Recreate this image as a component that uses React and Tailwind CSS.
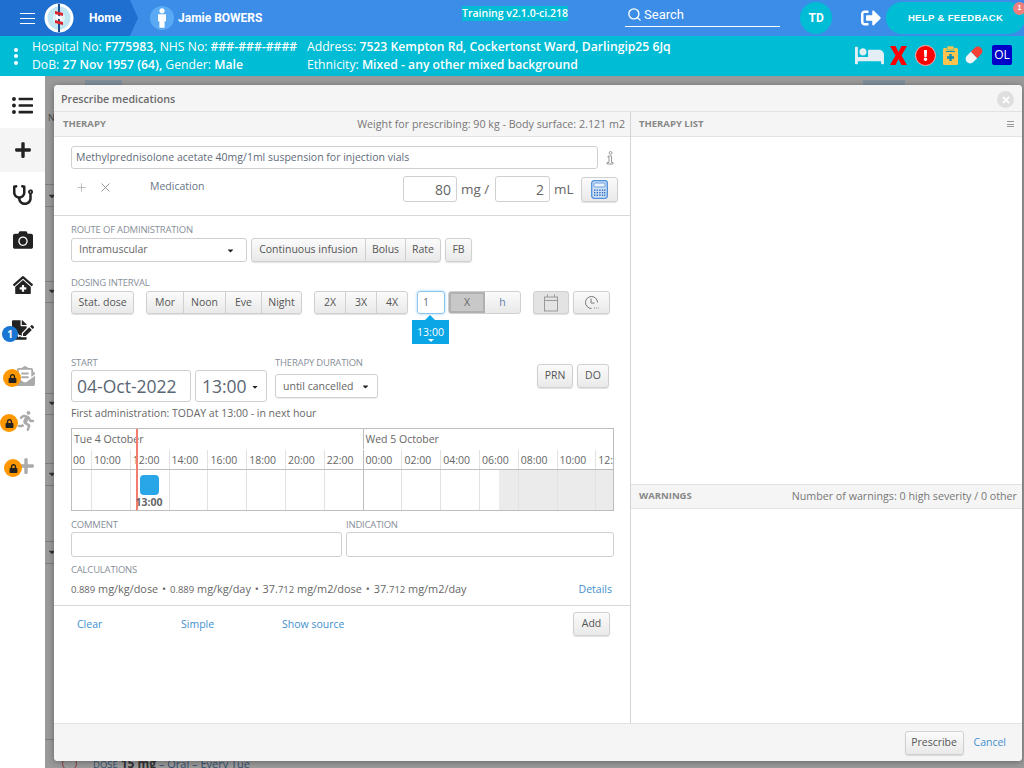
import React from "react";
import { FaListUl, FaPlus, FaStethoscope, FaCamera, FaClinicMedical, FaFileSignature, FaLock, FaRunning, FaEnvelopeOpenText, FaSignOutAlt, FaBed, FaExclamation, FaCaretDown, FaTimes } from "react-icons/fa";
import { Search, X, Plus } from "lucide-react";

const Label = ({ children, className = "" }) => (
  <div className={"text-[9.5px] leading-[12px] text-[#888f99] tracking-[-0.2px] " + className}>{children}</div>
);

const Btn = ({ children, className = "" }) => (
  <div className={"flex items-center justify-center border border-[#d0d0d0] rounded-[3px] bg-gradient-to-b from-[#fbfbfb] to-[#e9e9e9] text-[10.5px] text-[#555] shadow-[0_1px_1px_rgba(0,0,0,0.12)] " + className}>{children}</div>
);

const Group = ({ items }) => (
  <div className="flex border border-[#d0d0d0] rounded-[3px] bg-gradient-to-b from-[#fbfbfb] to-[#e9e9e9] shadow-[0_1px_1px_rgba(0,0,0,0.12)] text-[10.5px] text-[#555]">
    {items.map(([t, w], i) => (
      <div key={t} style={{ width: w }} className={"flex items-center justify-center " + (i ? "border-l border-[#d0d0d0]" : "")}>{t}</div>
    ))}
  </div>
);

const Lock = () => (
  <div className="w-[18px] h-[18px] rounded-full bg-[#ff9800] flex items-center justify-center text-[#222]">
    <FaLock size={9} />
  </div>
);

const Logo = () => (
  <svg width="30" height="30" viewBox="0 0 30 30">
    <circle cx="15" cy="15" r="14.5" fill="#fff" />
    <circle cx="15" cy="15" r="11.5" fill="#bfe6f2" />
    <circle cx="15" cy="15" r="6" fill="#e3f4f9" />
    <rect x="14" y="1" width="2" height="28" fill="#1d4f8f" />
    <path d="M11 8 L19 10 L19 13 L11 11 Z M11 17 L19 19 L19 22 L11 20 Z" fill="#d9252c" />
    <path d="M12 12 L18 14 L18 17 L12 15 Z" fill="#fff" />
  </svg>
);

const Person = () => (
  <svg width="12" height="20" viewBox="0 0 12 20" fill="#fff">
    <circle cx="6" cy="2.8" r="2.6" />
    <path d="M2 6.2 h8 v7 h-1.4 v6.5 h-5.2 v-6.5 H2 Z" />
  </svg>
);

const RedX = () => (
  <svg width="17" height="19" viewBox="0 0 17 19" fill="#f00">
    <path d="M0 0 H5.5 L8.5 6 L11.5 0 H17 L11.5 9.5 L17 19 H11.5 L8.5 13 L5.5 19 H0 L5.5 9.5 Z" />
  </svg>
);

const Clip = () => (
  <svg width="15" height="19" viewBox="0 0 15 19">
    <rect x="0" y="2" width="15" height="17" rx="1.5" fill="#ffc44d" />
    <rect x="4" y="0" width="7" height="4" rx="1" fill="#ffc44d" stroke="#00bcd4" strokeWidth="0.6" />
    <rect x="3" y="5" width="9" height="1" fill="#0a8fb5" />
    <path d="M6.3 8 h2.4 v2.3 H11 v2.4 H8.7 V15 H6.3 v-2.3 H4 v-2.4 h2.3 Z" fill="#0a8fb5" />
  </svg>
);

const Pill = () => (
  <svg width="20" height="20" viewBox="0 0 20 20">
    <g transform="rotate(-45 10 10)">
      <path d="M10 5.5 H15.5 a4.5 4.5 0 0 1 0 9 H10 Z" fill="#f44336" />
      <path d="M10 5.5 H4.5 a4.5 4.5 0 0 0 0 9 H10 Z" fill="#f4f4f4" />
    </g>
  </svg>
);

const Calc = () => (
  <svg width="17" height="19" viewBox="0 0 17 19" fill="none">
    <rect x="0.7" y="0.7" width="15.6" height="17.6" rx="2.5" fill="#cfe0f5" stroke="#4f8fdc" strokeWidth="1.3" />
    <rect x="3" y="3" width="11" height="4" rx="0.5" fill="#e9f1fb" stroke="#4f8fdc" strokeWidth="0.8" />
    {[9.5, 12, 14.5].map((y) => [3, 5.6, 8.2, 10.8, 13].map((x) => <rect key={x + "-" + y} x={x} y={y} width="1.4" height="1.4" fill="#2f6fc4" />))}
  </svg>
);

const ClockDots = () => (
  <svg width="15" height="15" viewBox="0 0 15 15" fill="none" stroke="#777" strokeWidth="1">
    <path d="M13.5 7.5 A6 6 0 1 0 7.5 13.5" />
    <path d="M7 3.5 V8 H10.5" />
    <path d="M10 13 h0.8 M12 13 h0.8 M14 13 h0.6" />
  </svg>
);

const CalIcon = () => (
  <svg width="16" height="18" viewBox="0 0 16 18" fill="none" stroke="#999" strokeWidth="1">
    <rect x="1.5" y="3" width="13" height="14" />
    <path d="M1.5 6.5 H14.5" />
    <path d="M4.5 0.5 V3 M11.5 0.5 V3" />
  </svg>
);

const InfoIcon = () => (
  <svg width="8" height="14" viewBox="0 0 8 14" fill="none" stroke="#999" strokeWidth="1">
    <circle cx="4.6" cy="1.9" r="1.4" />
    <path d="M2 5 H5.5 V11.5 H7 V13 H1 V11.5 H3 V6.4 H2 Z" />
  </svg>
);

const hours = ["10:00", "12:00", "14:00", "16:00", "18:00", "20:00", "22:00", "00:00", "02:00", "04:00", "06:00", "08:00", "10:00", "12:"];

const Timeline = () => (
  <div className="relative w-[543px] h-[83px] border border-[#bdbdbd] text-[10.5px] text-[#666] overflow-hidden">
    <div className="flex h-[20px] items-center">
      <div className="w-[290.5px] pl-[2px] pt-[1px]">Tue 4 October</div>
      <div className="flex-1 pl-[2px] pt-[1px] border-l border-[#bdbdbd] h-full flex items-center">Wed 5 October</div>
    </div>
    <div className="flex h-[21px] border-b border-[#bdbdbd] pt-[1px]">
      <div className="w-[19px] flex items-center overflow-hidden justify-end pr-[6px] shrink-0 pt-[2px]">00</div>
      {hours.map((h, i) => (
        <div key={i} className={"w-[38.8px] shrink-0 flex items-center pl-[2px] pt-[2px] border-l " + (i === 7 ? "border-[#bdbdbd]" : "border-[#e2e2e2]")}>{h}</div>
      ))}
    </div>
    <div className="flex h-[40px]">
      <div className="w-[19px] shrink-0" />
      {hours.map((h, i) => (
        <div key={i} className={"w-[38.8px] shrink-0 border-l " + (i === 7 ? "border-[#bdbdbd]" : "border-[#e2e2e2]") + (i >= 11 ? " bg-[#ebebeb]" : "")}>
          {i === 10 ? <div className="ml-[19px] h-full bg-[#ebebeb]" /> : null}
        </div>
      ))}
    </div>
    <div className="absolute left-[64px] top-0 bottom-0 w-[2px] bg-[#f47c6e]" />
    <div className="absolute left-[68px] top-[46px] w-[19px] h-[20px] rounded-[4px] bg-[#29a6e8]" />
    <div className="absolute left-[62px] top-[67px] w-[30px] text-center font-bold text-[10.5px] leading-[13px] text-[#666]">13:00</div>
  </div>
);

const StripLine = ({ className }) => <div className={"absolute left-0 w-[12px] h-px bg-[#7d7d7d] " + className} />;

export default function App() {
  return (
    <div className="w-[1024px] h-[768px] overflow-hidden flex flex-col font-['Open_Sans',sans-serif] bg-white">
      {/* top bar */}
      <div className="h-[36px] flex bg-[#3b8de8] text-white shrink-0">
        <div className="w-[138px] shrink-0 h-full bg-[#1f6fd1] [clip-path:polygon(0_0,130px_0,138px_50%,130px_100%,0_100%)] flex items-center pl-[20px]">
          <div className="flex flex-col gap-[4px] w-[15px]">
            <div className="h-[1px] bg-white" /><div className="h-[1px] bg-white" /><div className="h-[1px] bg-white" />
          </div>
          <div className="ml-[9px]"><Logo /></div>
          <div className="ml-[15px] text-[12px] font-bold font-['Roboto',sans-serif]">Home</div>
        </div>
        <div className="ml-[12px] w-[24px] h-[24px] mt-[6px] rounded-full bg-[#5aa9f5] flex items-center justify-center shrink-0"><Person /></div>
        <div className="ml-[4px] mt-[10px] w-[84px] shrink-0 text-[12px] leading-[16px] font-bold font-['Roboto',sans-serif] whitespace-nowrap">Jamie BOWERS</div>
        <div className="ml-[200px] mt-[6px] h-[15px] shrink-0 bg-[#00bcd4] text-[10.5px] leading-[14px] px-0 font-semibold whitespace-nowrap">Training v2.1.0-ci.218</div>
        <div className="ml-[57px] mt-[3px] w-[155px] h-[24px] shrink-0 border-b border-white flex items-center pl-[2px]">
          <Search size={15} strokeWidth={2.2} />
          <span className="ml-[2px] text-[13px] font-['Roboto',sans-serif]">Search</span>
        </div>
        <div className="ml-[20px] mt-[2px] w-[32px] h-[32px] shrink-0 rounded-full bg-[#00bcd4] flex items-center justify-center text-[12px] font-bold font-['Roboto',sans-serif]">TD</div>
        <div className="ml-[29px] mt-[8px] shrink-0"><FaSignOutAlt size={20} /></div>
        <div className="ml-[5px] mt-[2px] relative w-[139px] h-[32px] shrink-0 rounded-[16px] bg-[#00bcd4] flex items-center justify-center text-[9.5px] font-bold tracking-[0.35px] font-['Liberation_Sans',sans-serif]">
          HELP &amp; FEEDBACK
          <div className="absolute right-[-1px] top-0 w-[13px] h-[13px] rounded-full bg-[#ef7f7f] flex items-center justify-center text-[7px]">1</div>
        </div>
      </div>

      {/* patient bar */}
      <div className="h-[40px] bg-[#00bcd4] text-white flex shrink-0 text-[12.2px] leading-[18.5px]">
        <div className="w-[32px] flex flex-col items-center justify-center gap-[2.5px]">
          <div className="w-[4px] h-[4px] rounded-full bg-white" />
          <div className="w-[4px] h-[4px] rounded-full bg-white" />
          <div className="w-[4px] h-[4px] rounded-full bg-white" />
        </div>
        <div className="w-[275px] pt-[1.5px] whitespace-nowrap">
          <div>Hospital No: <b className="font-semibold">F775983,</b> NHS No: <b className="font-semibold">###-###-####</b></div>
          <div>DoB: <b className="font-semibold">27 Nov 1957 (64),</b> Gender: <b className="font-semibold">Male</b></div>
        </div>
        <div className="w-[548px] pt-[1.5px] whitespace-nowrap">
          <div>Address: <b className="font-semibold">7523 Kempton Rd, Cockertonst Ward, Darlingip25 6Jq</b></div>
          <div>Ethnicity: <b className="font-semibold">Mixed - any other mixed background</b></div>
        </div>
        <div className="flex items-center h-[40px] pb-[2px]">
          <FaBed size={29} color="#e3eef5" />
          <div className="ml-[6px]"><RedX /></div>
          <div className="ml-[8px] w-[21px] h-[21px] rounded-full bg-[#f00] border border-[#ffb0b0] flex items-center justify-center"><FaExclamation size={11} color="#fff" /></div>
          <div className="ml-[7px]"><Clip /></div>
          <div className="ml-[6px]"><Pill /></div>
          <div className="ml-[8px] w-[20px] h-[20px] rounded-[2px] bg-[#0000c8] flex items-center justify-center text-[12px]">OL</div>
        </div>
      </div>

      <div className="flex flex-1 min-h-0">
        {/* sidebar */}
        <div className="w-[45px] shrink-0 bg-white flex flex-col items-center text-[#222]">
          <div className="h-[52px] w-full flex items-center justify-center pt-[6px]"><FaListUl size={21} /></div>
          <div className="h-[44px] w-full bg-[#f5f5f5] flex items-center justify-center"><FaPlus size={18} /></div>
          <div className="h-[45px] w-full flex items-center justify-center"><FaStethoscope size={20} /></div>
          <div className="h-[46px] w-full flex items-center justify-center"><FaCamera size={20} /></div>
          <div className="h-[44px] w-full flex items-center justify-center"><FaClinicMedical size={20} /></div>
          <div className="relative h-[46px] w-full flex items-center justify-center">
            <FaFileSignature size={22} />
            <div className="absolute left-[2px] top-[19px] w-[16px] h-[16px] rounded-full bg-[#1976d2] text-white text-[10px] font-bold flex items-center justify-center">1</div>
          </div>
          <div className="relative h-[45px] w-full flex items-center justify-center text-[#aaa]">
            <FaEnvelopeOpenText size={20} className="ml-[4px]" />
            <div className="absolute left-[3px] top-[16px]"><Lock /></div>
          </div>
          <div className="relative h-[45px] w-full flex items-center justify-center text-[#aaa]">
            <FaRunning size={20} className="ml-[6px]" />
            <div className="absolute left-[0px] top-[16px]"><Lock /></div>
          </div>
          <div className="relative h-[45px] w-full flex items-center justify-center text-[#aaa]">
            <FaPlus size={18} className="ml-[6px]" />
            <div className="absolute left-[4px] top-[16px]"><Lock /></div>
          </div>
        </div>

        {/* backdrop */}
        <div className="relative flex-1 bg-[#9a9a9a] pl-[9px] pt-[9px] overflow-hidden">
          <div className="absolute left-[40px] top-[4px] w-[37px] h-[6px] bg-[#7f8f9c]" />
          <div className="absolute left-[818px] top-[4px] w-[42px] h-[6px] bg-[#7f8f9c]" />
          <div className="absolute left-[3px] top-[37px] w-[10px] text-[9px] leading-[10px] text-[#444]">N</div>
          <StripLine className="top-[108px]" />
          <StripLine className="top-[130px]" />
          <StripLine className="top-[205px]" />
          <StripLine className="top-[226px]" />
          <StripLine className="top-[317px]" />
          <StripLine className="top-[338px]" />
          <StripLine className="top-[387px]" />
          <StripLine className="top-[409px]" />
          <StripLine className="top-[465px]" />
          <StripLine className="top-[487px]" />
          <StripLine className="top-[663px]" />
          <FaCaretDown size={10} className="absolute left-[2px] top-[115px] text-[#333]" />
          <FaCaretDown size={10} className="absolute left-[2px] top-[210px] text-[#333]" />
          <FaCaretDown size={10} className="absolute left-[2px] top-[322px] text-[#333]" />
          <FaCaretDown size={10} className="absolute left-[2px] top-[393px] text-[#333]" />
          <FaCaretDown size={10} className="absolute left-[2px] top-[471px] text-[#333]" />
          <div className="absolute left-[17px] top-[680px] w-[15px] h-[15px] rounded-full border border-[#8a3a3a]" />
          <div className="absolute left-[48px] top-[680px] text-[11px] leading-[16px] whitespace-nowrap text-[#35506e]"><span className="text-[9.5px]">DOSE</span> <b className="text-[#333] text-[12px]">15 mg</b> – Oral – Every Tue</div>

          {/* modal */}
          <div className="relative w-[968px] h-[676px] bg-white rounded-[4px] flex flex-col shadow-[0_1px_6px_rgba(0,0,0,0.35)] overflow-hidden text-[10.5px] text-[#666]">
            <div className="h-[27px] shrink-0 bg-[#f5f5f5] border-b border-[#e2e2e2] flex items-center justify-between pl-[7px] pr-[8px] pt-[3px]">
              <div className="text-[10.7px] font-semibold text-[#6b6b6b]">Prescribe medications</div>
              <div className="w-[17px] h-[17px] rounded-full bg-[#dfdfdf] flex items-center justify-center"><FaTimes size={10} color="#fff" /></div>
            </div>

            <div className="flex flex-1 min-h-0">
              {/* left */}
              <div className="w-[577px] shrink-0 border-r border-[#d4d4d4] flex flex-col">
                <div className="h-[25px] shrink-0 bg-[#f5f5f5] border-b border-[#e2e2e2] flex items-center justify-between pl-[9px] pr-[5px]">
                  <div className="text-[9.5px] font-bold text-[#888]">THERAPY</div>
                  <div className="text-[10.7px] text-[#777]">Weight for prescribing: 90 kg - Body surface: 2.121 m2</div>
                </div>

                <div className="h-[79px] shrink-0 border-b border-[#d8d8d8] pl-[17px]">
                  <div className="flex items-center mt-[9px]">
                    <div className="w-[527px] h-[23px] border border-[#d0d0d0] rounded-[3px] flex items-center pl-[4px] text-[#5f6b78]">Methylprednisolone acetate 40mg/1ml suspension for injection vials</div>
                    <div className="ml-[8px]"><InfoIcon /></div>
                  </div>
                  <div className="flex items-center mt-[7px] h-[26px]">
                    <div className="flex items-center h-[20px] mb-[4px]">
                      <Plus size={13} strokeWidth={1.4} className="ml-[4px] text-[#aaa]" />
                      <X size={15} strokeWidth={1.4} className="ml-[10px] text-[#888]" />
                      <div className="ml-[37px] text-[#677584] w-[56px]">Medication</div>
                    </div>
                    <div className="ml-[197px] w-[54px] h-[26px] border border-[#d0d0d0] rounded-[3px] flex items-center justify-end pr-[5px] text-[14px]">80</div>
                    <div className="ml-[4px] w-[34px] text-[13.5px]">mg /</div>
                    <div className="w-[55px] h-[26px] border border-[#d0d0d0] rounded-[3px] flex items-center justify-end pr-[5px] text-[14px]">2</div>
                    <div className="ml-[4px] w-[27px] text-[13.5px]">mL</div>
                    <Btn className="w-[37px] h-[25px]"><Calc /></Btn>
                  </div>
                </div>

                <div className="pl-[17px] flex-1 min-h-0 flex flex-col">
                  <Label className="mt-[8px]">ROUTE OF ADMINISTRATION</Label>
                  <div className="flex mt-[2px] h-[24px]">
                    <div className="w-[176px] border border-[#d0d0d0] rounded-[3px] flex items-center justify-between pl-[7px] pr-[11px] text-[#666]">
                      Intramuscular <FaCaretDown size={9} className="text-[#222]" />
                    </div>
                    <div className="ml-[4px] flex">
                      <Group items={[["Continuous infusion", 113], ["Bolus", 40], ["Rate", 35]]} />
                    </div>
                    <Btn className="ml-[4px] w-[27px]">FB</Btn>
                  </div>

                  <Label className="mt-[15px]">DOSING INTERVAL</Label>
                  <div className="flex mt-[2px] h-[23px]">
                    <Btn className="w-[63px]">Stat. dose</Btn>
                    <div className="ml-[12px] flex"><Group items={[["Mor", 36], ["Noon", 42], ["Eve", 36], ["Night", 40]]} /></div>
                    <div className="ml-[12px] flex"><Group items={[["2X", 30], ["3X", 31], ["4X", 31]]} /></div>
                    <div className="relative ml-[9px] w-[28px] border border-[#8cc4ee] rounded-[3px] flex items-center pl-[5px] text-[#5f6b78] shadow-[0_0_3px_rgba(100,180,240,0.6)]">
                      1
                      <div className="absolute left-[-6px] top-[28px] w-[37px] h-[24px] bg-[#0ba6e6] text-white flex flex-col items-center justify-center pt-[3px] leading-[12px] z-10">
                        <div className="absolute top-[-5px] left-[13px] w-0 h-0 border-l-[5px] border-r-[5px] border-b-[5px] border-l-transparent border-r-transparent border-b-[#0ba6e6]" />
                        13:00
                        <div className="w-0 h-0 mt-[1px] border-l-[3px] border-r-[3px] border-t-[3px] border-l-transparent border-r-transparent border-t-white" />
                      </div>
                    </div>
                    <div className="ml-[3px] flex h-[23px] rounded-[3px] border border-[#d0d0d0] bg-gradient-to-b from-[#fbfbfb] to-[#e9e9e9] overflow-hidden text-[10.5px]">
                      <div className="w-[36px] flex items-center justify-center bg-[#c8c8c8] border-2 border-[#b0b0b0] text-[#666]">X</div>
                      <div className="w-[35px] flex items-center justify-center text-[#5f7fa8]">h</div>
                    </div>
                    <Btn className="ml-[12px] w-[36px] !bg-none bg-[#e3e3e3]"><CalIcon /></Btn>
                    <Btn className="ml-[4px] w-[37px]"><ClockDots /></Btn>
                  </div>

                  <div className="flex mt-[43px]">
                    <div>
                      <Label>START</Label>
                      <div className="flex mt-[1px]">
                        <div className="w-[120px] h-[32px] border border-[#d0d0d0] rounded-[3px] flex items-center pl-[5px] pt-[1px] text-[17.5px] text-[#5a6673]">04-Oct-2022</div>
                        <div className="ml-[4px] w-[72px] h-[32px] border border-[#d0d0d0] rounded-[3px] flex items-center pl-[6px] pt-[1px] text-[17.5px] text-[#5a6673]">13:00<FaCaretDown size={8} className="ml-[4px] text-[#222]" /></div>
                      </div>
                    </div>
                    <div className="ml-[8px]">
                      <Label>THERAPY DURATION</Label>
                      <div className="mt-[5px] w-[103px] h-[24px] border border-[#d0d0d0] rounded-[3px] flex items-center pl-[7px] pt-[1px] text-[#666] shadow-[0_1px_1px_rgba(0,0,0,0.08)]">until cancelled<FaCaretDown size={9} className="ml-[7px] text-[#222]" /></div>
                    </div>
                    <Btn className="ml-[159px] mt-[7px] w-[36px] h-[24px]">PRN</Btn>
                    <Btn className="ml-[4px] mt-[7px] w-[32px] h-[24px]">DO</Btn>
                  </div>

                  <div className="mt-[4px] h-[14px] leading-[14px]">First administration: TODAY at 13:00 - in next hour</div>

                  <div className="mt-[8px]"><Timeline /></div>

                  <div className="flex mt-[8px]">
                    <div className="w-[275px]">
                      <Label>COMMENT</Label>
                      <div className="mt-[1px] w-[271px] h-[25px] border border-[#d0d0d0] rounded-[3px]" />
                    </div>
                    <div>
                      <Label>INDICATION</Label>
                      <div className="mt-[1px] w-[268px] h-[25px] border border-[#d0d0d0] rounded-[3px]" />
                    </div>
                  </div>

                  <Label className="mt-[7px]">CALCULATIONS</Label>
                  <div className="flex justify-between w-[541px] mt-[6px] h-[14px] leading-[14px] text-[10.9px]">
                    <div className="whitespace-nowrap"><span className="text-[9.5px]">0.889</span> mg/kg/dose <span className="mx-[1px]">•</span> <span className="text-[9.5px]">0.889</span> mg/kg/day <span className="mx-[1px]">•</span> 37.<span className="text-[9.5px]">712</span> mg/m2/dose <span className="mx-[1px]">•</span> 37.<span className="text-[9.5px]">712</span> mg/m2/day</div>
                    <div className="text-[#3f8fd0] text-[10.5px]">Details</div>
                  </div>
                </div>

                <div className="h-[118px] shrink-0 border-t border-[#d8d8d8] pl-[23px] text-[#3f8fd0]">
                  <div className="flex items-center mt-[6px] h-[24px]">
                    <div className="w-[104px] pt-[1px]">Clear</div>
                    <div className="w-[101px] pt-[1px]">Simple</div>
                    <div className="w-[291px] pt-[1px]">Show source</div>
                    <Btn className="w-[37px] h-[24px]">Add</Btn>
                  </div>
                </div>
              </div>

              {/* right */}
              <div className="flex-1 flex flex-col min-w-0">
                <div className="h-[25px] shrink-0 bg-[#f5f5f5] border-b border-[#e2e2e2] flex items-center justify-between pl-[8px] pr-[8px]">
                  <div className="text-[9.5px] font-bold text-[#888]">THERAPY LIST</div>
                  <div className="flex flex-col gap-[1.5px] w-[7px]">
                    <div className="h-[1px] bg-[#999]" /><div className="h-[1px] bg-[#999]" /><div className="h-[1px] bg-[#999]" />
                  </div>
                </div>
                <div className="h-[347px] shrink-0" />
                <div className="h-[25px] shrink-0 bg-[#f5f5f5] border-y border-[#e2e2e2] flex items-center justify-between pl-[8px] pr-[5px]">
                  <div className="text-[9.5px] font-bold text-[#888]">WARNINGS</div>
                  <div className="text-[10.7px] text-[#777]">Number of warnings: 0 high severity / 0 other</div>
                </div>
              </div>
            </div>

            <div className="h-[38px] shrink-0 bg-[#f5f5f5] border-t border-[#e2e2e2] flex items-center justify-end pr-[16px] pt-[1px]">
              <Btn className="w-[59px] h-[24px]">Prescribe</Btn>
              <div className="ml-[10px] text-[#3f8fd0]">Cancel</div>
            </div>
          </div>
        </div>
      </div>
    </div>
  );
}
